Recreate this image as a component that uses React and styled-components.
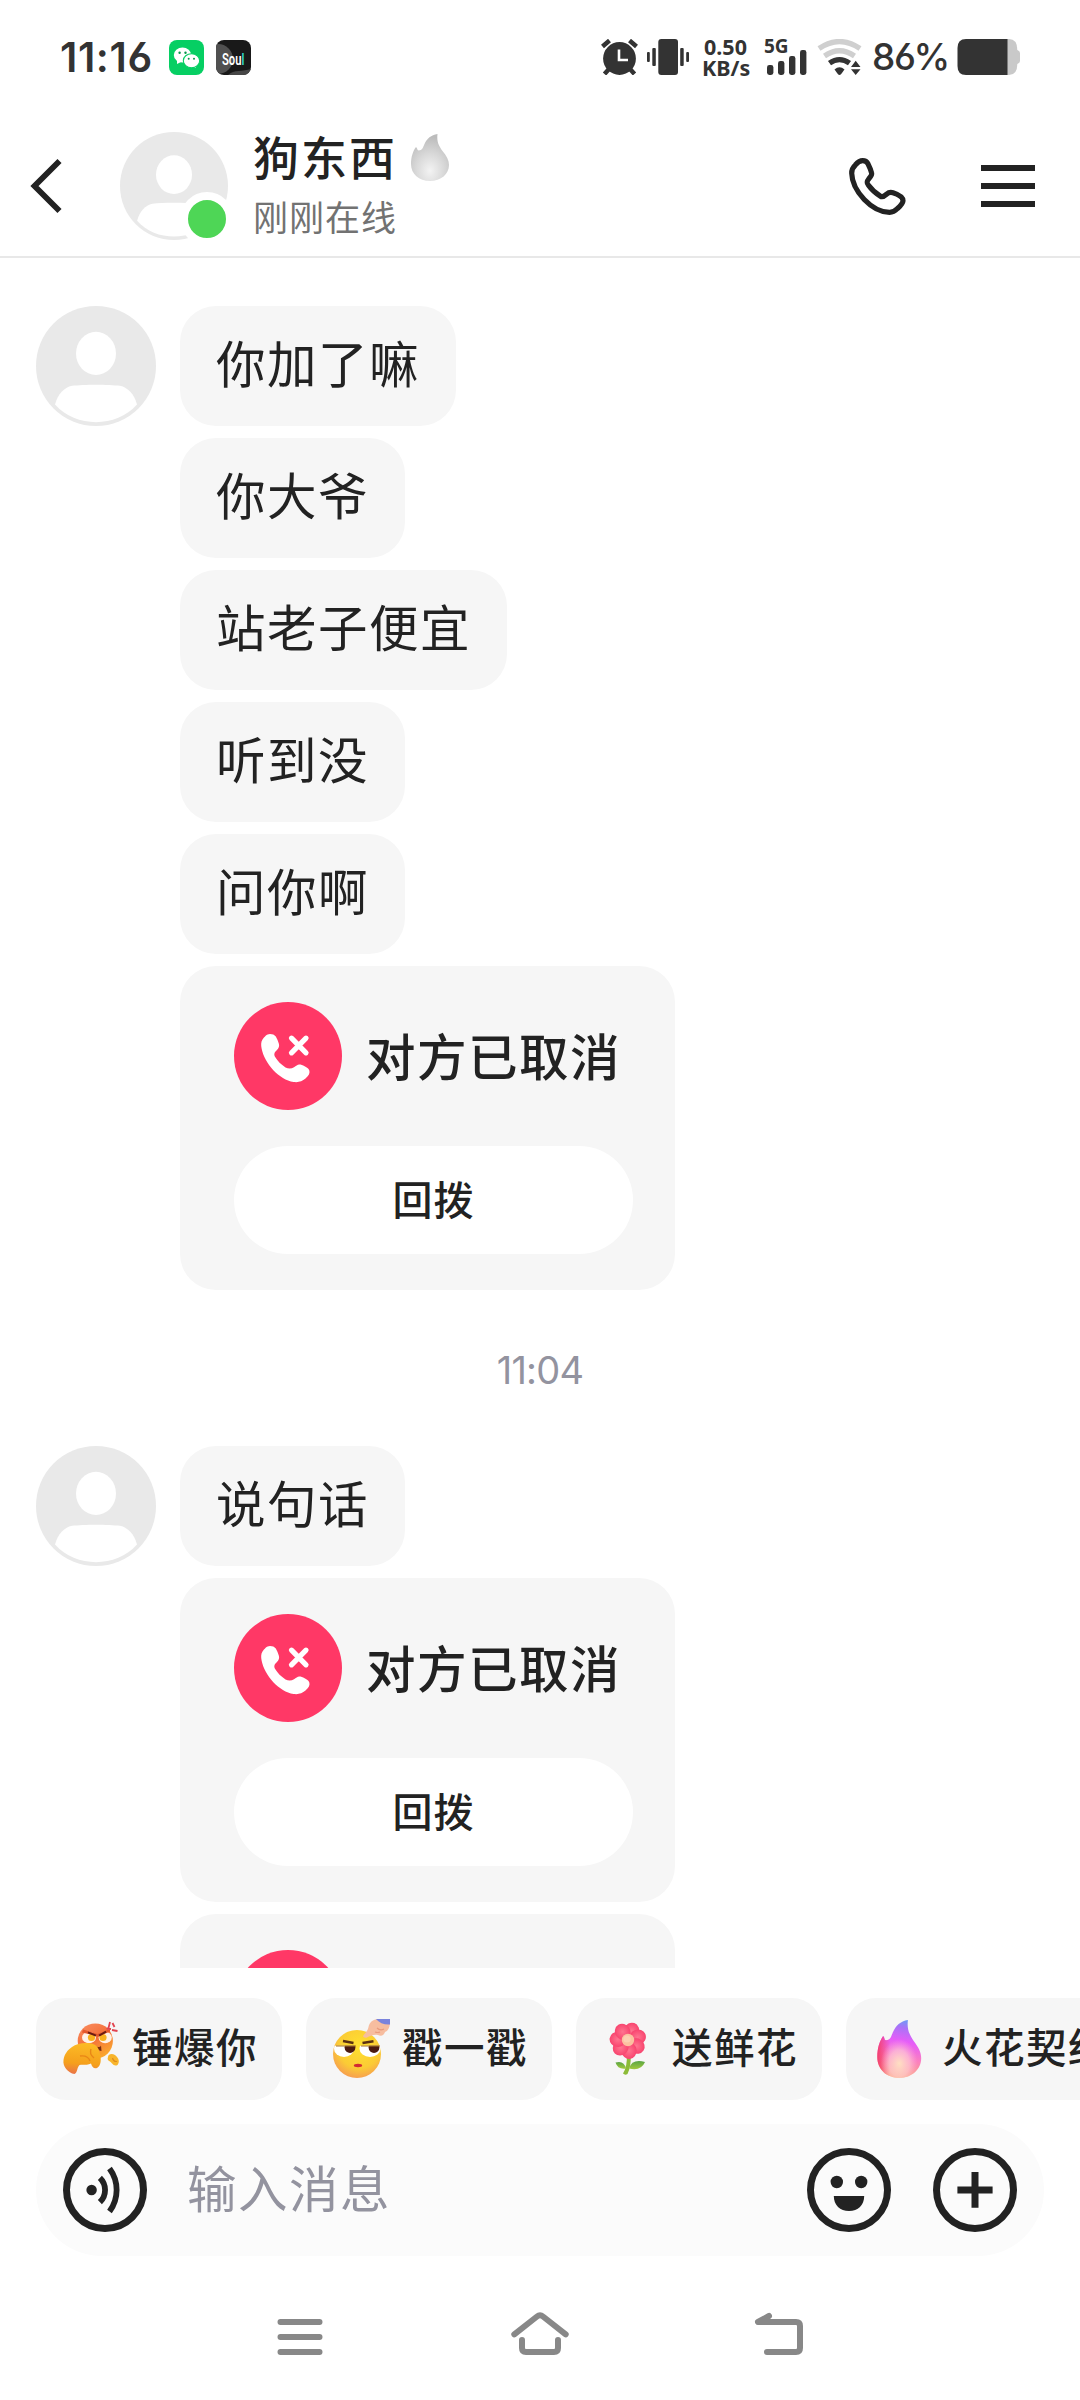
import styled, { createGlobalStyle, css } from "styled-components";

const GlobalStyle = createGlobalStyle`
  * {
    box-sizing: border-box;
  }

  body {
    margin: 0;
    background-color: #ffffff;
    color: #222222;
    font-family: "Noto Sans CJK SC", sans-serif;
  }

  button {
    border: none;
    padding: 0;
    margin: 0;
    background: none;
    color: inherit;
    font-family: inherit;
  }

  svg {
    display: block;
    flex-shrink: 0;
  }
`

const Screen = styled.div`
  display: flex;
  flex-direction: column;
  width: 1080px;
  height: 2400px;
  overflow: hidden;
  background-color: #ffffff;
`

/* ---------- status bar ---------- */

const StatusBar = styled.div`
  display: flex;
  align-items: center;
  justify-content: space-between;
  height: 114px;
  padding: 0 60px 0 60px;
  color: #333333;
  font-family: Inter, sans-serif;
`

const StatusGroup = styled.div`
  display: flex;
  align-items: center;
`

const StatusItem = styled.div`
  width: ${({ $width }) => $width}px;
  margin-left: ${({ $left }) => $left}px;
  white-space: nowrap;
`

const Clock = styled.div`
  width: 109px;
  font-size: 41px;
  font-weight: 600;
  line-height: 48px;
  letter-spacing: 0.6px;
  font-feature-settings: "ss01";
`

const Speed = styled.div`
  font-family: "Noto Sans", sans-serif;
  font-size: 21.5px;
  font-weight: 700;
  line-height: 21px;
  text-align: center;
`

const Network = styled.div`
  display: flex;
  flex-direction: column;
  height: 36px;
`

const NetworkName = styled.div`
  height: 11px;
  font-family: "Noto Sans", sans-serif;
  font-size: 19px;
  font-weight: 700;
  line-height: 15px;
`

const Percent = styled.div`
  font-size: 37px;
  font-weight: 500;
  line-height: 48px;
  letter-spacing: -1.2px;
  font-feature-settings: "ss01";
`

/* ---------- header ---------- */

const Header = styled.div`
  display: flex;
  align-items: center;
  height: 144px;
  padding: 2px 45px 0 30px;
  border-bottom: 2px solid #e8e8e8;
`

const HeaderAvatar = styled.div`
  position: relative;
  width: 108px;
  height: 108px;
  margin-left: 57px;
`

const OnlineDot = styled.div`
  position: absolute;
  left: 60px;
  top: 60px;
  width: 54px;
  height: 54px;
  border: 8px solid #ffffff;
  border-radius: 50%;
  background-color: #4ed656;
`

const Contact = styled.div`
  display: flex;
  flex-direction: column;
  flex: 1;
  margin-left: 25px;
`

const NameRow = styled.div`
  display: flex;
  align-items: center;
  height: 58px;
`

const Name = styled.div`
  width: 158px;
  height: 58px;
  font-size: 46px;
  font-weight: 500;
  line-height: 54px;
  letter-spacing: 2px;
`

const Presence = styled.div`
  height: 58px;
  color: #727272;
  font-size: 35px;
  line-height: 60px;
  letter-spacing: 1px;
`

const HeaderActions = styled.div`
  display: flex;
  align-items: center;
  gap: 73px;
`

/* ---------- chat ---------- */

const Chat = styled.div`
  height: 1710px;
  padding: 48px 36px 0;
  overflow: hidden;
`

const MessageGroup = styled.div`
  display: flex;
  align-items: flex-start;
  gap: 24px;
`

const Messages = styled.div`
  display: flex;
  flex-direction: column;
  align-items: flex-start;
  gap: 12px;
`

const Bubble = styled.div`
  height: 120px;
  padding: 0 36px;
  border-radius: 36px;
  background-color: #f6f6f6;
  font-size: 49.5px;
  line-height: 112px;
  letter-spacing: 1.5px;
`

const CallCard = styled.div`
  display: flex;
  flex-direction: column;
  gap: 36px;
  width: 495px;
  height: 324px;
  padding: 36px 42px 36px 54px;
  border-radius: 36px;
  background-color: #f6f6f6;
`

const CallRow = styled.div`
  display: flex;
  align-items: center;
  gap: 24px;
  height: 108px;
`

const CallTitle = styled.div`
  height: 108px;
  font-size: 49.5px;
  font-weight: 500;
  line-height: 106px;
  letter-spacing: 1.5px;
  white-space: nowrap;
`

const CallBackButton = styled.button`
  display: flex;
  justify-content: center;
  width: 399px;
  height: 108px;
  border-radius: 54px;
  background-color: #ffffff;
  font-size: 40px;
  font-weight: 500;
  line-height: 104px;
  letter-spacing: 1px;
`

const TimeLabel = styled.div`
  height: 156px;
  padding-top: 3px;
  color: #93939f;
  font-family: Inter, sans-serif;
  font-size: 38px;
  line-height: 154px;
  letter-spacing: -0.8px;
  text-align: center;
`

/* ---------- bottom ---------- */

const QuickBar = styled.div`
  display: flex;
  gap: 24px;
  height: 156px;
  padding: 30px 0 24px 36px;
`

const QuickChip = styled.button`
  display: flex;
  align-items: center;
  flex-shrink: 0;
  gap: 12px;
  height: 102px;
  padding: 0 24px;
  border-radius: 30px;
  background-color: #f6f6f6;
  white-space: nowrap;
`

const ChipLabel = styled.span`
  height: 102px;
  font-size: 40.5px;
  font-weight: 500;
  line-height: 96px;
  letter-spacing: 1.5px;
`

const InputBar = styled.div`
  display: flex;
  align-items: center;
  height: 132px;
  margin: 0 36px;
  padding: 0 27px;
  border-radius: 66px;
  background-color: #fbfbfb;
`

const Placeholder = styled.div`
  flex: 1;
  height: 132px;
  margin-left: 40px;
  color: #93939f;
  font-size: 49.5px;
  line-height: 125px;
  letter-spacing: 1.5px;
`

const InputActions = styled.div`
  display: flex;
  gap: 42px;
`

const navIcon = css`
  width: 60px;
  height: 48px;
  fill: none;
  stroke: #888888;
  stroke-width: 6;
  stroke-linecap: round;
  stroke-linejoin: round;
`

const NavBar = styled.div`
  display: flex;
  justify-content: center;
  gap: 180px;
  height: 144px;
  padding-top: 54px;
`

const NavIcon = styled.svg`
  ${navIcon}
`

/* ---------- icons ---------- */

const WechatIcon = () => (
  <svg width="35" height="35" viewBox="0 0 35 35">
    <rect width="35" height="35" rx="8" fill="#06cf63" />
    <path d="M8 20 L8 24 L12 22Z M26 24 L27 28 L22 26Z" fill="#fff" />
    <ellipse cx="13.5" cy="15" rx="8.7" ry="7.6" fill="#fff" />
    <ellipse cx="22.5" cy="20.7" rx="8.2" ry="7" fill="#fff" stroke="#06cf63" strokeWidth="1.1" />
    <g fill="#06994b">
      <circle cx="10.6" cy="12.8" r="1.2" />
      <circle cx="16.5" cy="12.8" r="1.2" />
      <circle cx="19.7" cy="18.7" r="1" />
      <circle cx="25" cy="18.7" r="1" />
    </g>
  </svg>
)

const SoulIcon = () => (
  <svg width="35" height="35" viewBox="0 0 35 35">
    <defs>
      <clipPath id="soulClip">
        <rect width="35" height="35" rx="8" />
      </clipPath>
    </defs>
    <g clipPath="url(#soulClip)">
      <rect width="35" height="35" fill="#191919" />
      <circle cx="2" cy="19" r="15" fill="#505050" />
      <path d="M12 35 C18 29 27 32 35 29 V35Z" fill="#474747" />
    </g>
    <g transform="translate(6 24.5) scale(0.66 1)" fontFamily="Roboto, sans-serif" fontSize="17" fontWeight="600">
      <text fill="#fff">Sou<tspan fill="#32d9cb">l</tspan></text>
    </g>
  </svg>
)

const AlarmIcon = () => (
  <svg width="38" height="36" viewBox="0 0 38 36">
    <g stroke="#333" strokeWidth="4.5" strokeLinecap="butt">
      <path d="M1.5 7.5 L8.5 1.5 M28.5 1.5 L35.5 7.5" />
      <path d="M8 30 L3.5 35 M29 30 L33.5 35" />
    </g>
    <circle cx="18.5" cy="19.5" r="16.4" fill="#333" />
    <path d="M18 10.5 V21 H27" fill="none" stroke="#fff" strokeWidth="2.6" />
  </svg>
)

const VibrateIcon = () => (
  <svg width="43" height="36" viewBox="0 0 43 36" fill="#333">
    <rect x="0" y="13" width="2.8" height="10" rx="1" />
    <rect x="5.3" y="9" width="3.5" height="18" rx="1" />
    <rect x="11.3" y="0" width="19.7" height="36" rx="3" />
    <rect x="33.2" y="9" width="3.5" height="18" rx="1" />
    <rect x="39.2" y="13" width="2.8" height="10" rx="1" />
  </svg>
)

const SignalBars = () => (
  <svg width="43" height="25" viewBox="0 0 43 25" fill="#333">
    <rect x="3" y="15" width="6.4" height="10" rx="2.4" />
    <rect x="14" y="11" width="6.4" height="14" rx="2.4" />
    <rect x="25" y="6" width="6.4" height="19" rx="2.4" />
    <rect x="36" y="0" width="6.4" height="25" rx="2.4" />
  </svg>
)

const WifiIcon = () => (
  <svg width="46" height="36" viewBox="0 0 46 36">
    <g fill="none" strokeWidth="5.2">
      <path d="M2 9.5 Q22.5 -4.5 43 9.5" stroke="#cfcfcf" />
      <path d="M7.5 17 Q22.5 6.5 37.5 17" stroke="#cfcfcf" />
      <path d="M12.5 24.2 Q22.5 17 32.5 24.2" stroke="#333" />
    </g>
    <path d="M17.5 30.5 Q22.5 26 27.5 30.5 L24.2 35 Q22.5 37 20.8 35Z" fill="#333" />
    <path d="M34 28 L38.7 21.7 L43.5 28Z M34 30.3 L38.7 36 L43.5 30.3Z" fill="#333" />
  </svg>
)

const BatteryIcon = () => (
  <svg width="63" height="36" viewBox="0 0 63 36">
    <path d="M50 0 H52 Q60.3 0 60.3 11 Q63 12 63 14 V22 Q63 24 60.3 25 Q60.3 36 52 36 H50Z" fill="#c9c9c9" />
    <path d="M9 0 H50.5 V36 H9 Q0.5 36 0.5 27 V9 Q0.5 0 9 0Z" fill="#333" />
  </svg>
)

const BackIcon = () => (
  <svg width="33" height="56" viewBox="0 0 33 56">
    <path d="M29.5 3 L4.5 28 L29.5 53" fill="none" stroke="#222" strokeWidth="5.8" />
  </svg>
)

const PhoneIcon = () => (
  <svg width="62" height="62" viewBox="0 0 62 62">
    <path
      d="M16.7 5.7 C13.5 5.7 11.5 7.5 9.5 9.8 C6.6 12.5 5.5 15 5.7 18.3 C6.2 36 26 57.3 43.6 57.3 C46.5 57.3 49 56 51.5 53.5 C54.5 50.8 56.8 48.5 57 45.7 C57 42 53 39.8 47 37.8 C44 36.8 42.5 37.5 40.5 39.2 C38.5 41 36.5 42.5 34.5 41.2 C30 38.5 25.5 34.5 22.3 30 C20.3 27.5 21 26 22.8 23.8 C24.8 21.5 26.2 20 25.6 18 C25 15 23.6 12 22 8.8 C20.8 6.6 19 5.7 16.7 5.7Z"
      fill="none"
      stroke="#222"
      strokeWidth="5.2"
      strokeLinejoin="round"
    />
  </svg>
)

const MenuIcon = () => (
  <svg width="54" height="42" viewBox="0 0 54 42">
    <path d="M0 3 H54 M0 21 H54 M0 39 H54" stroke="#222" strokeWidth="6" />
  </svg>
)

const Avatar = ({ size }) => (
  <svg width={size} height={size} viewBox="0 0 120 120">
    <circle cx="60" cy="60" r="60" fill="#e9e9e9" />
    <ellipse cx="60" cy="47.4" rx="20" ry="21.6" fill="#fff" />
    <path
      d="M19 98.5 C22 88 28 81.5 36 79.8 C48 78.3 72 78.3 84 79.8 C92 81.5 98 88 101 98.5 C80 122 40 122 19 98.5Z"
      fill="#fff"
    />
  </svg>
)

const flamePath =
  "M26.5 0 C25.5 8 28 12 31.5 17 C35.5 22 38 26 38 31 C38 40 30 47 19 47 C8 47 0 40 0 30 C0 23 2 17 5 13 C6.5 14 6 16.3 7.5 16.5 C11.5 16.5 12 13 13.5 10 C16 4.5 20 1 26.5 0Z"

const GrayFlame = () => (
  <svg width="38" height="47" viewBox="0 0 38 47">
    <defs>
      <radialGradient id="grayFlame" cx="0.5" cy="0.78" r="0.72">
        <stop offset="0" stopColor="#f3f3f3" />
        <stop offset="0.5" stopColor="#d9d9d9" />
        <stop offset="1" stopColor="#bcbcbc" />
      </radialGradient>
    </defs>
    <path d={flamePath} fill="url(#grayFlame)" />
  </svg>
)

const PunchIcon = () => (
  <svg width="60" height="60" viewBox="0 0 60 60">
    <defs>
      <linearGradient id="punchHead" x1="0.2" y1="0" x2="0.8" y2="1">
        <stop offset="0" stopColor="#f98a5c" />
        <stop offset="0.45" stopColor="#f4703a" />
        <stop offset="1" stopColor="#fbb02c" />
      </linearGradient>
      <linearGradient id="punchFist" x1="0.4" y1="0" x2="0.3" y2="1">
        <stop offset="0" stopColor="#fcbb25" />
        <stop offset="0.65" stopColor="#f5a01c" />
        <stop offset="1" stopColor="#ea7448" />
      </linearGradient>
    </defs>
    <circle cx="35.3" cy="22" r="17.6" fill="url(#punchHead)" />
    <ellipse cx="29" cy="18.5" rx="7" ry="5.8" fill="#fff1e6" />
    <ellipse cx="45.2" cy="18.5" rx="6.6" ry="5.8" fill="#fff1e6" />
    <circle cx="31.5" cy="18.5" r="3.6" fill="#f9b21f" />
    <circle cx="43" cy="18.5" r="3.6" fill="#f9b21f" />
    <path d="M22 13.5 L37 17 L37.5 18 L50 12.5 L50 10 L37.5 15 L23 10.5Z" fill="#e4582c" />
    <path d="M28 13.3 L36 16.7 M39 16.7 L46 12.7" stroke="#6a1d13" strokeWidth="2" />
    <path d="M36.5 27.5 Q40 29 41 26.5 L41.5 32 Q38.5 32 36.5 27.5Z" fill="#7a2c12" />
    <path d="M50 3 L48.5 9 M46.5 9.5 L51 10 M52.5 4 L54.5 8 M52 11 L57.5 12" stroke="#e2434f" strokeWidth="1.8" />
    <path
      d="M12 28 C17 24 27 23 33 25 C38 26.5 39 31 40 35 C41.5 40 41 47 37 49 C34 50 32 48 31 44.5 C27 46.5 22 45.5 19.5 46 C16.5 49 18 53 14.5 55 C8 54 2.5 47.5 3.5 41 C4.5 35 7.5 31 12 28Z"
      fill="url(#punchFist)"
    />
    <path d="M20 37 Q28 36 30 42 M31 30 Q29 35 34 39" fill="none" stroke="#e98716" strokeWidth="1.4" />
    <path
      d="M48 38 C48 35 52 34 55 36 C59 39 60 43 57.5 46 C53.5 48 52 43.5 50 42.5 C48 42 47 40 48 38Z"
      fill="#f8b52c"
    />
    <path d="M52.5 39 Q53.5 43 57 42.5" fill="none" stroke="#de8a1c" strokeWidth="1.1" />
  </svg>
)

const PokeIcon = () => (
  <svg width="60" height="60" viewBox="0 0 60 60">
    <defs>
      <radialGradient id="pokeFace" cx="0.55" cy="0.35" r="0.68">
        <stop offset="0" stopColor="#ffe12f" />
        <stop offset="0.65" stopColor="#fbcb35" />
        <stop offset="1" stopColor="#f69b52" />
      </radialGradient>
      <clipPath id="eyeClip">
        <rect x="0" y="26.8" width="60" height="20" />
      </clipPath>
    </defs>
    <circle cx="27" cy="35" r="24" fill="url(#pokeFace)" />
    <g clipPath="url(#eyeClip)">
      <ellipse cx="14" cy="29.8" rx="10" ry="8.2" fill="#fff" />
      <ellipse cx="40" cy="29.8" rx="10.5" ry="8.2" fill="#fff" />
      <circle cx="20" cy="28.5" r="5.4" fill="#4b1a10" />
      <circle cx="44" cy="28.5" r="5.4" fill="#4b1a10" />
    </g>
    <path d="M6 27 H26 M31 27 H50" stroke="#a8742a" strokeWidth="1" />
    <path d="M13 22 L23.5 24 M32.5 24 L43.5 22.3" stroke="#5a3012" strokeWidth="2.4" />
    <ellipse cx="28" cy="46.5" rx="4.2" ry="1.7" fill="#d22a33" />
    <path
      d="M33 17 C35 14 38 12 38.5 8 C39.5 3 43 0.5 48 0 L60 4 C59.5 9 58 12 55 13 C54 16.5 51 17.5 48 16 C44 15 40 17 37 18.5 C35 19 33.5 18.5 33 17Z"
      fill="#f7bd9f"
    />
    <path d="M47 9 Q50 12 54 10 M45 13 Q48 14 50 13" fill="none" stroke="#ea9a7c" strokeWidth="1.2" />
    <path d="M46 0 H60 V5.5 Q51 6 46 0Z" fill="#7a83dc" />
  </svg>
)

const petals = [0, 51.4, 102.8, 154.2, 205.6, 257, 308.4]

const FlowerIcon = () => (
  <svg width="60" height="60" viewBox="0 0 60 60">
    <defs>
      <radialGradient id="petal">
        <stop offset="0" stopColor="#ff7590" />
        <stop offset="1" stopColor="#f8456f" />
      </radialGradient>
      <linearGradient id="leaf" x1="0" y1="0" x2="0" y2="1">
        <stop offset="0" stopColor="#5aa544" />
        <stop offset="1" stopColor="#a3c93d" />
      </linearGradient>
    </defs>
    <path d="M26.8 36 H30.8 Q31 48 27.5 55 Q25 56.5 23 54.5 Q27.5 47 26.8 36Z" fill="#8cbb38" />
    <path d="M26 49.5 Q18 51 15.5 43.5 Q24 41 26 49.5Z" fill="url(#leaf)" />
    <path d="M29 49.5 Q32 39.5 45 43 Q41 52.5 29 49.5Z" fill="url(#leaf)" />
    <circle cx="28" cy="21.5" r="12" fill="#fa4f76" />
    {petals.map((angle) => (
      <ellipse
        key={angle}
        cx="28"
        cy="11.3"
        rx="7.6"
        ry="8.3"
        fill="url(#petal)"
        transform={`rotate(${angle + 20} 28 21.5)`}
      />
    ))}
    <circle cx="28" cy="21" r="6.2" fill="#fcc1a0" />
    <circle cx="27" cy="20" r="3.6" fill="#fdd0b2" />
  </svg>
)

const ColorFlame = () => (
  <svg width="60" height="60" viewBox="0 0 60 60">
    <defs>
      <linearGradient id="flameBase" x1="0.6" y1="0" x2="0.45" y2="1">
        <stop offset="0" stopColor="#6f9af5" />
        <stop offset="0.13" stopColor="#a873f7" />
        <stop offset="0.36" stopColor="#e65df8" />
        <stop offset="0.65" stopColor="#fb7fc0" />
        <stop offset="1" stopColor="#fcae74" />
      </linearGradient>
      <radialGradient id="flameGlow" cx="0.5" cy="0.75" r="0.42">
        <stop offset="0" stopColor="#ffe9c4" stopOpacity="0.9" />
        <stop offset="0.55" stopColor="#ffcfd8" stopOpacity="0.65" />
        <stop offset="1" stopColor="#fdb0e8" stopOpacity="0" />
      </radialGradient>
      <linearGradient id="flameEdge" x1="0" y1="0" x2="1" y2="0">
        <stop offset="0" stopColor="#f23a6b" stopOpacity="0.95" />
        <stop offset="0.3" stopColor="#f23a6b" stopOpacity="0" />
      </linearGradient>
    </defs>
    <g transform="translate(7.3 1) scale(1.155 1.23)">
      <path d={flamePath} fill="url(#flameBase)" />
      <path d={flamePath} fill="url(#flameEdge)" />
      <path d={flamePath} fill="url(#flameGlow)" />
    </g>
  </svg>
)

const CallCancelledIcon = () => (
  <svg width="108" height="108" viewBox="0 0 108 108">
    <circle cx="54" cy="54" r="54" fill="#ff3866" />
    <path
      d="M36 32 C32.5 32 30.5 35 28.5 37.5 C26.8 40 27 43 27.6 46.5 C30.5 61.5 45.5 78 59.5 80 C64.5 80.6 68 79.6 71.5 76.6 C74.5 74 76 71.5 75.4 68.8 C74.5 65.5 70 64 66.5 62.6 C64 61.8 62.5 63.5 60 65.2 C57.5 66.8 54.5 67 51.5 65.4 C47 62.5 43.5 59 41.5 55.5 C39.5 52.5 40.3 50.5 42.5 48.5 C45 46.2 45.6 44 44.8 41.5 C44 39 43 36.5 41.8 34.5 C40.5 32.8 38.5 32 36 32Z"
      fill="#fff"
    />
    <path d="M57.5 36.2 L72 50.8 M72 36.2 L57.5 50.8" stroke="#fff" strokeWidth="5.2" strokeLinecap="round" />
  </svg>
)

const VoiceIcon = () => (
  <svg width="84" height="84" viewBox="0 0 84 84" fill="none" stroke="#222">
    <circle cx="42" cy="42" r="38.5" strokeWidth="7" />
    <circle cx="28.6" cy="42" r="5.2" fill="#222" stroke="none" />
    <path d="M36.9 29.8 A17 17 0 0 1 36.9 54.2" strokeWidth="5.8" />
    <path d="M46.5 20.5 A36 36 0 0 1 46.5 63.5" strokeWidth="5.8" />
  </svg>
)

const SmileIcon = () => (
  <svg width="84" height="84" viewBox="0 0 84 84" fill="#222">
    <circle cx="42" cy="42" r="38.5" fill="none" stroke="#222" strokeWidth="7" />
    <circle cx="29.8" cy="34" r="6.2" />
    <circle cx="54.2" cy="34" r="6.2" />
    <path d="M26.8 48 H57.2 C57.2 57 51 63 42 63 C33 63 26.8 57 26.8 48Z" />
  </svg>
)

const PlusIcon = () => (
  <svg width="84" height="84" viewBox="0 0 84 84" fill="none" stroke="#222" strokeWidth="7">
    <circle cx="42" cy="42" r="38.5" />
    <path d="M24.4 42 H59.6 M42 24 V59.7" />
  </svg>
)

/* ---------- page ---------- */

const firstMessages = ["你加了嘛", "你大爷", "站老子便宜", "听到没", "问你啊"]

const quickActions = [
  { label: "锤爆你", icon: <PunchIcon /> },
  { label: "戳一戳", icon: <PokeIcon /> },
  { label: "送鲜花", icon: <FlowerIcon /> },
  { label: "火花契约", icon: <ColorFlame /> },
]

const CancelledCall = () => {
  return (
    <CallCard>
      <CallRow>
        <CallCancelledIcon />
        <CallTitle>对方已取消</CallTitle>
      </CallRow>
      <CallBackButton>回拨</CallBackButton>
    </CallCard>
  )
}

const App = () => {
  return (
    <>
      <GlobalStyle />
      <Screen>
        <StatusBar>
          <StatusGroup>
            <Clock>11:16</Clock>
            <WechatIcon />
            <StatusItem $left={12} $width={35}><SoulIcon /></StatusItem>
          </StatusGroup>
          <StatusGroup>
            <AlarmIcon />
            <StatusItem $left={8} $width={43}><VibrateIcon /></StatusItem>
            <StatusItem $left={12} $width={47}>
              <Speed>0.50<br />KB/s</Speed>
            </StatusItem>
            <StatusItem $left={15} $width={43}>
              <Network>
                <NetworkName>5G</NetworkName>
                <SignalBars />
              </Network>
            </StatusItem>
            <StatusItem $left={10} $width={46}><WifiIcon /></StatusItem>
            <StatusItem $left={9} $width={76}><Percent>86%</Percent></StatusItem>
            <StatusItem $left={9} $width={63}><BatteryIcon /></StatusItem>
          </StatusGroup>
        </StatusBar>

        <Header>
          <BackIcon />
          <HeaderAvatar>
            <Avatar size={108} />
            <OnlineDot />
          </HeaderAvatar>
          <Contact>
            <NameRow>
              <Name>狗东西</Name>
              <GrayFlame />
            </NameRow>
            <Presence>刚刚在线</Presence>
          </Contact>
          <HeaderActions>
            <PhoneIcon />
            <MenuIcon />
          </HeaderActions>
        </Header>

        <Chat>
          <MessageGroup>
            <Avatar size={120} />
            <Messages>
              {firstMessages.map((text) => (
                <Bubble key={text}>{text}</Bubble>
              ))}
              <CancelledCall />
            </Messages>
          </MessageGroup>
          <TimeLabel>11:04</TimeLabel>
          <MessageGroup>
            <Avatar size={120} />
            <Messages>
              <Bubble>说句话</Bubble>
              <CancelledCall />
              <CancelledCall />
            </Messages>
          </MessageGroup>
        </Chat>

        <QuickBar>
          {quickActions.map(({ label, icon }) => (
            <QuickChip key={label}>
              {icon}
              <ChipLabel>{label}</ChipLabel>
            </QuickChip>
          ))}
        </QuickBar>

        <InputBar>
          <VoiceIcon />
          <Placeholder>输入消息</Placeholder>
          <InputActions>
            <SmileIcon />
            <PlusIcon />
          </InputActions>
        </InputBar>

        <NavBar>
          <NavIcon viewBox="0 0 60 48">
            <path d="M10.5 12 H49.5 M10.5 27 H49.5 M10.5 42 H49.5" />
          </NavIcon>
          <NavIcon viewBox="0 0 60 48">
            <path d="M4.3 24.3 L27 6.5 Q30 4 33 6.5 L55.7 24.3 M12 30 V38 Q12 42 16 42 H44 Q48 42 48 38 V30" />
          </NavIcon>
          <NavIcon viewBox="0 0 60 48">
            <path d="M19 6 L8 12 H46 Q50 12 50 16 V38 Q50 42 46 42 H17" />
          </NavIcon>
        </NavBar>
      </Screen>
    </>
  )
}

export default App
